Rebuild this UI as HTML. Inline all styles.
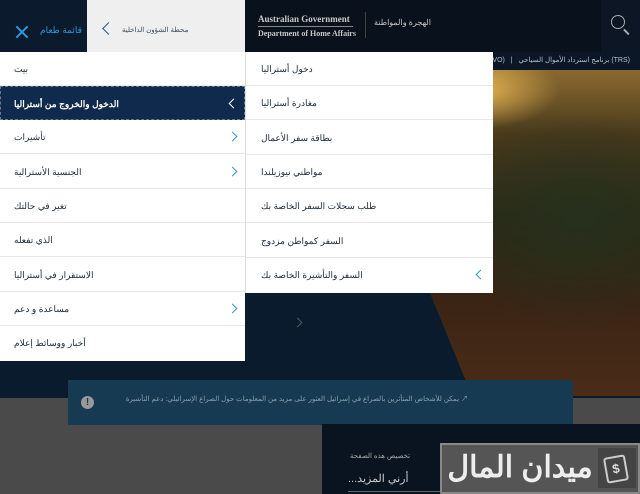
<!DOCTYPE html>
<html><head><meta charset="utf-8"><style>
*{margin:0;padding:0;box-sizing:border-box}
body{width:640px;height:494px;overflow:hidden;position:relative;background:#4a4a4a;font-family:"Liberation Sans","Noto Sans CJK SC",sans-serif}
.abs{position:absolute}
.row{position:absolute;left:0;width:100%;height:34px;border-bottom:1px solid #e8e8e8;font-size:9px;color:#1a2a3a;line-height:34px}
.row span{position:absolute;white-space:nowrap;direction:rtl}
.lp .row span{left:14px}
.rp .row span{left:15px}
.chev{position:absolute;width:7px;height:7px;border-left:1.6px solid #2c9ad6;border-bottom:1.6px solid #2c9ad6;transform:rotate(-135deg)}
</style></head><body>
<div class="abs" style="left:0;top:52px;width:640px;height:346px;background:#0b1b2e"></div>
<div class="abs" style="left:380px;top:70px;width:260px;height:326px;clip-path:polygon(40px 0,260px 0,260px 326px,92px 326px,50px 223px);background:
radial-gradient(ellipse 90px 40px at 90px 20px,rgba(255,200,90,.9),rgba(200,120,40,0) 100%),
radial-gradient(ellipse 140px 110px at 200px 150px,#26301c,rgba(38,48,28,0)),
linear-gradient(180deg,#8a6a30 0%,#4a3a1c 20%,#2a2a18 45%,#3a2414 70%,#4a2c18 100%)"></div>
<div class="abs" style="left:245px;top:52px;width:395px;height:18px;background:#0b1626;font-size:7px;color:#b8c0c8;direction:rtl;line-height:18px;padding-right:10px">(TRS) برنامج استرداد الأموال السياحي &nbsp;&nbsp;|&nbsp;&nbsp; (VEVO)</div>
<div class="abs" style="left:0;top:0;width:640px;height:52px;background:#08111c"></div>
<div class="abs" style="left:0;top:0;width:87px;height:52px;background:#0b1a2c"></div>
<div class="abs" style="left:14px;top:31px;width:16px;height:2px;background:#2c9ad6;transform:rotate(45deg)"></div>
<div class="abs" style="left:14px;top:31px;width:16px;height:2px;background:#2c9ad6;transform:rotate(-45deg)"></div>
<div class="abs" style="left:40px;top:25px;font-size:9px;color:#2c9ad6;white-space:nowrap">قائمة طعام</div>
<div class="abs" style="left:87px;top:0;width:158px;height:52px;background:#efefef"></div>
<div class="abs chev" style="left:104px;top:24px;transform:rotate(45deg);border-color:#1a5a8e;width:9px;height:9px"></div>
<div class="abs" style="left:122px;top:26px;font-size:7px;color:#3a4a5a;white-space:nowrap">محطة الشؤون الداخلية</div>
<div class="abs" style="left:258px;top:14px;font-size:9px;color:#c8c8c8;font-family:'Liberation Serif',serif;font-weight:bold">Australian Government</div>
<div class="abs" style="left:258px;top:26px;width:95px;height:1px;background:#888"></div>
<div class="abs" style="left:258px;top:29px;font-size:8px;color:#c8c8c8;font-family:'Liberation Serif',serif;font-weight:bold">Department of Home Affairs</div>
<div class="abs" style="left:365px;top:12px;width:1px;height:26px;background:#444"></div>
<div class="abs" style="left:374px;top:18px;font-size:8px;color:#c8c8c8">الهجرة والمواطنة</div>
<div class="abs" style="left:601px;top:0;width:39px;height:52px;background:#0c1624"></div>
<div class="abs" style="left:611px;top:15px;width:14px;height:14px;border:1.6px solid #aaa;border-radius:50%"></div>
<div class="abs" style="left:623px;top:31px;width:7px;height:1.6px;background:#aaa;transform:rotate(45deg)"></div>
<div class="abs lp" style="left:0;top:52px;width:245px;height:309px;background:#fff">
<div class="row" style="top:0"><span>بيت</span></div>
<div class="row" style="top:34px;background:#0f2a4c;color:#fff;font-weight:bold;border:1px dashed #6a7a8a"><span style="left:13px">الدخول والخروج من أستراليا</span><i class="chev" style="left:229px;top:13px;border-color:#fff;transform:rotate(45deg)"></i></div>
<div class="row" style="top:68px"><span>تأشيرات</span><i class="chev" style="left:229px;top:13px"></i></div>
<div class="row" style="top:103px"><span>الجنسية الأسترالية</span><i class="chev" style="left:229px;top:13px"></i></div>
<div class="row" style="top:137px"><span>تغير في حالتك</span></div>
<div class="row" style="top:171px"><span>الذي تفعله</span></div>
<div class="row" style="top:206px"><span>الاستقرار في أستراليا</span></div>
<div class="row" style="top:240px"><span>مساعدة و دعم</span><i class="chev" style="left:229px;top:13px"></i></div>
<div class="row" style="top:274px;border:none"><span>أخبار ووسائط إعلام</span></div>
</div>
<div class="abs rp" style="left:245px;top:52px;width:248px;height:241px;background:#fff;border-left:1px solid #ddd">
<div class="row" style="top:0"><span>دخول أستراليا</span></div>
<div class="row" style="top:34px"><span>مغادرة أستراليا</span></div>
<div class="row" style="top:69px"><span>بطاقة سفر الأعمال</span></div>
<div class="row" style="top:103px"><span>مواطني نيوزيلندا</span></div>
<div class="row" style="top:137px"><span>طلب سجلات السفر الخاصة بك</span></div>
<div class="row" style="top:172px"><span>السفر كمواطن مزدوج</span></div>
<div class="row" style="top:206px;border:none"><span>السفر والتأشيرة الخاصة بك</span><i class="chev" style="left:231px;top:13px;transform:rotate(45deg)"></i></div>
</div>
<div class="abs chev" style="left:294px;top:319px;border-color:#556;transform:rotate(-135deg)"></div>
<div class="abs" style="left:68px;top:380px;width:505px;height:45px;background:#163a52"></div>
<div class="abs" style="left:81px;top:396px;width:13px;height:13px;border-radius:50%;background:#999;color:#163a52;font-size:10px;font-weight:bold;text-align:center;line-height:13px">!</div>
<div class="abs" style="left:108px;top:394px;width:360px;font-size:7px;color:#8ea0b0;direction:rtl;text-align:right;white-space:nowrap">↗ يمكن للأشخاص المتأثرين بالصراع في إسرائيل العثور على مزيد من المعلومات حول الصراع الإسرائيلي: دعم التأشيرة</div>
<div class="abs" style="left:322px;top:424px;width:318px;height:70px;background:#0a1420"></div>
<div class="abs" style="left:350px;top:452px;font-size:7px;color:#aaa;white-space:nowrap">تخصيص هذه الصفحة</div>
<div class="abs" style="left:348px;top:472px;font-size:11px;color:#ccc;white-space:nowrap">...أرني المزيد</div>
<div class="abs" style="left:348px;top:491px;width:95px;height:1px;background:#666"></div>
<div class="abs" style="left:440px;top:443px;width:200px;height:51px;background:#555;border:2px solid #888"></div>
<div class="abs" style="left:444px;top:443px;width:152px;height:50px;font-size:30px;color:#eee;font-weight:bold;text-align:center;line-height:50px;white-space:nowrap;direction:rtl">ميدان المال</div>
<div class="abs" style="left:598px;top:448px;width:38px;height:40px;background:#444"></div>
<div class="abs" style="left:605px;top:456px;width:22px;height:26px;border:2px solid #ccc;border-radius:3px;color:#ddd;font-size:13px;font-weight:bold;text-align:center;line-height:22px;transform:rotate(-10deg)">$</div>
</body></html>
